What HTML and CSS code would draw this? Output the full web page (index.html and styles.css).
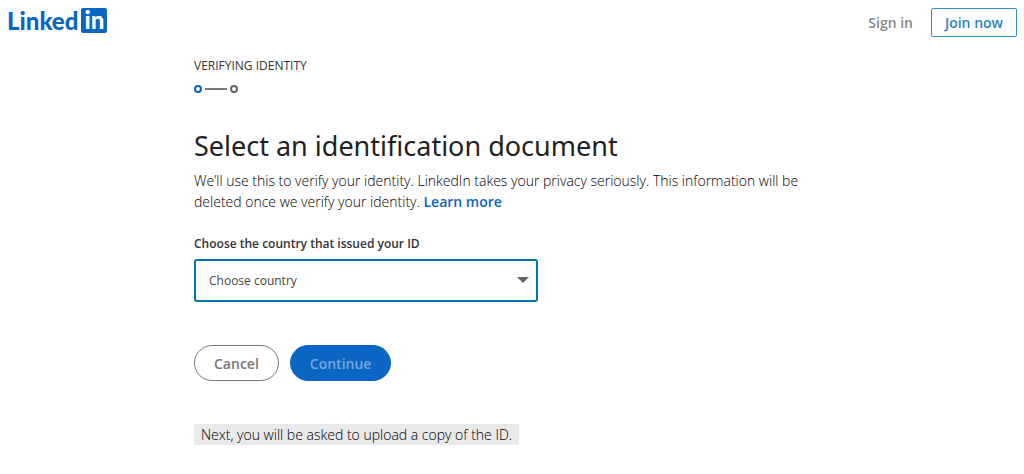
FILE: index.html
```html
<!DOCTYPE html>
<html lang="en">
<head>
<meta charset="utf-8">
<meta name="viewport" content="width=device-width, initial-scale=1">
<title>Verifying identity | LinkedIn</title>
<link rel="stylesheet" href="styles.css">
</head>
<body>
<header class="site-header">
  <a class="logo" href="#" aria-label="LinkedIn"><span class="logo-word">Linked</span><span class="logo-box">in</span></a>
  <nav class="account">
    <a class="sign-in" href="#">Sign in</a>
    <a class="join" href="#">Join now</a>
  </nav>
</header>
<main class="content">
  <p class="step-title">VERIFYING IDENTITY</p>
  <div class="steps" aria-hidden="true">
    <span class="step step-active"></span>
    <span class="step-line"></span>
    <span class="step"></span>
  </div>
  <h1 class="heading">Select an identification document</h1>
  <p class="intro">We’ll use this to verify your identity. LinkedIn takes your privacy seriously. This information will be deleted once we verify your identity. <a class="learn-more" href="#">Learn more</a></p>
  <form class="id-form">
    <label class="field-label" for="country">Choose the country that issued your ID</label>
    <div class="select-wrap">
      <select class="country" id="country"><option>Choose country</option></select>
      <svg class="caret" viewBox="0 0 12 6" aria-hidden="true"><path d="M0 0h12L6 6z"/></svg>
    </div>
    <div class="actions">
      <button class="button cancel" type="button">Cancel</button>
      <button class="button continue" type="submit" disabled>Continue</button>
    </div>
  </form>
  <p class="note">Next, you will be asked to upload a copy of the ID.</p>
</main>
</body>
</html>
```
FILE: styles.css
```css
* {
  box-sizing: border-box;
}

body {
  margin: 0;
  background: #fff;
  color: #333;
  font: 14px/21px "Segoe UI", "Open Sans", sans-serif;
}

a {
  text-decoration: none;
}

p,
h1 {
  margin: 0;
}

.site-header {
  display: flex;
  align-items: flex-start;
  justify-content: space-between;
  padding: 8px 7px 0;
}

.logo {
  display: flex;
  gap: 3px;
  color: #0a66c2;
  font-family: Lato, sans-serif;
  font-weight: 900;
  line-height: 26px;
}

.logo-word {
  font-size: 24px;
}

.logo-box {
  width: 26px;
  height: 25px;
  border-radius: 2px;
  background: #0a66c2;
  color: #fff;
  font-size: 24px;
  line-height: 24px;
  text-align: center;
}

.account {
  display: flex;
  align-items: center;
  gap: 18px;
  font-weight: 600;
}

.sign-in {
  color: #86888a;
}

.join {
  padding: 3px 13px;
  border: 1px solid #2a8fc9;
  border-radius: 2px;
  color: #1f86c0;
}

.content {
  max-width: 636px;
  margin: 0 auto;
  padding: 17px 0 24px;
}

.step-title {
  font-size: 12px;
  line-height: 24px;
}

.steps {
  display: flex;
  align-items: center;
  gap: 3px;
  margin-top: 7px;
}

.step {
  width: 8px;
  height: 8px;
  border: 2px solid #666;
  border-radius: 50%;
}

.step-active {
  border-color: #0a66c2;
}

.step-line {
  width: 22px;
  height: 2px;
  background: #777;
}

.heading {
  margin-top: 35px;
  color: #222;
  font-family: "Segoe UI", "Noto Sans", sans-serif;
  font-size: 27px;
  font-weight: 400;
  line-height: 36px;
}

.intro {
  margin-top: 6px;
  color: #000;
  font-weight: 300;
}

.learn-more {
  color: #0a66c2;
  font-weight: 600;
}

.id-form {
  margin-top: 21px;
}

.field-label {
  display: block;
  font-size: 12px;
  font-weight: 600;
}

.select-wrap {
  position: relative;
  max-width: 344px;
  margin-top: 5px;
}

.country {
  display: block;
  width: 100%;
  height: 43px;
  padding: 0 36px 0 13px;
  border: 2px solid #0073b1;
  border-radius: 3px;
  appearance: none;
  background: #fff;
  color: #444;
  font: inherit;
  font-size: 12px;
}

.caret {
  position: absolute;
  top: 18px;
  right: 9px;
  width: 12px;
  height: 6px;
  fill: #666;
  pointer-events: none;
}

.actions {
  display: flex;
  gap: 11px;
  margin-top: 43px;
}

.button {
  height: 36px;
  padding: 0 19px;
  border: 1px solid #777;
  border-radius: 18px;
  background: #fff;
  color: #777;
  font: inherit;
  font-weight: 600;
}

.continue {
  border-color: #0a66c2;
  background: #0a66c2;
  color: #75a8dc;
}

.note {
  width: fit-content;
  margin-top: 43px;
  padding: 0 7px;
  background: #e9e9e9;
  color: #000;
  font-weight: 300;
}
```
